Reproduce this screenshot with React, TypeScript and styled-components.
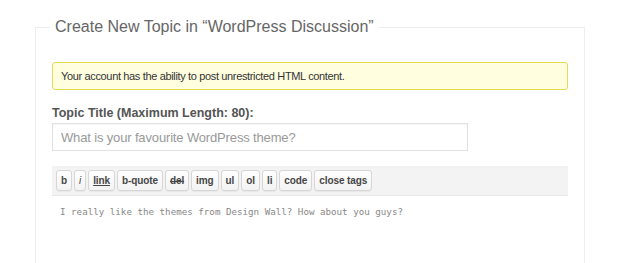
import React from "react";
import styled, { createGlobalStyle } from "styled-components";

const GlobalStyle = createGlobalStyle`
  html, body {
    margin: 0;
    padding: 0;
    background: #ffffff;
  }

  body {
    font-family: "Liberation Sans", Arial, sans-serif;
    color: #333;
  }
`;

const Page = styled.div`
  padding: 18px 0 0 35px;
  width: 550px;
`;

const TopicForm = styled.fieldset`
  margin: 0;
  padding: 0 16px 36px 16px;
  border: 1px solid #ededed;
  border-bottom: none;
  display: flex;
  flex-direction: column;
`;

const Legend = styled.legend`
  margin-left: -2px;
  padding: 0 5px;
  font-size: 16px;
  line-height: 18px;
  color: #666;
`;

const Notice = styled.div`
  margin-top: 26px;
  height: 26px;
  display: flex;
  align-items: center;
  padding: 0 8px;
  background: #ffffe0;
  border: 1px solid #e6db55;
  border-radius: 3px;
  font-size: 11px;
  letter-spacing: -0.35px;
  color: #333;
`;

const FieldLabel = styled.label`
  margin-top: 15px;
  font-size: 12.5px;
  font-weight: bold;
  line-height: 16px;
  color: #555;
`;

const TitleInput = styled.input`
  margin-top: 2px;
  box-sizing: border-box;
  width: 416px;
  height: 28px;
  padding: 0 8px;
  border: 1px solid #e2e2e2;
  box-shadow: inset 0 1px 2px rgba(0, 0, 0, 0.04);
  font-family: "Liberation Sans", Arial, sans-serif;
  font-size: 13px;
  letter-spacing: -0.15px;
  color: #333;
  outline: none;

  &::placeholder {
    color: #999;
  }
`;

const Toolbar = styled.div`
  margin-top: 15px;
  box-sizing: border-box;
  height: 30px;
  padding: 4px 4px 0;
  display: flex;
  gap: 2px;
  background: #f3f3f3;
  border-bottom: 1px solid #e6e6e6;
`;

const TagButton = styled.button<{ $mode?: "italic" | "link" | "del" }>`
  box-sizing: border-box;
  height: 21px;
  min-width: 12px;
  padding: 0 4px;
  border: 1px solid #d6d6d6;
  border-radius: 3px;
  background: linear-gradient(#fefefe, #f3f3f3);
  box-shadow: 0 1px 0 rgba(0, 0, 0, 0.04);
  font-family: "Liberation Sans", Arial, sans-serif;
  font-size: 10px;
  letter-spacing: -0.1px;
  font-weight: ${p => (p.$mode === "italic" ? "normal" : "bold")};
  font-style: ${p => (p.$mode === "italic" ? "italic" : "normal")};
  text-decoration: ${p =>
    p.$mode === "link" ? "underline" : p.$mode === "del" ? "line-through" : "none"};
  color: #464646;
  cursor: pointer;
`;

const Body = styled.div`
  padding: 10px 8px;
  font-family: "DejaVu Sans Mono", "Liberation Mono", monospace;
  font-size: 9.2px;
  line-height: 12px;
  color: #888;
`;

const tags: { label: string; mode?: "italic" | "link" | "del" }[] = [
  { label: "b" },
  { label: "i", mode: "italic" },
  { label: "link", mode: "link" },
  { label: "b-quote" },
  { label: "del", mode: "del" },
  { label: "img" },
  { label: "ul" },
  { label: "ol" },
  { label: "li" },
  { label: "code" },
  { label: "close tags" },
];

const App = () => {
  return (
    <Page>
      <GlobalStyle />
      <TopicForm>
        <Legend>Create New Topic in “WordPress Discussion”</Legend>
        <Notice>Your account has the ability to post unrestricted HTML content.</Notice>
        <FieldLabel>Topic Title (Maximum Length: 80):</FieldLabel>
        <TitleInput placeholder="What is your favourite WordPress theme?" />
        <Toolbar>
          {tags.map(t => (
            <TagButton key={t.label} $mode={t.mode}>
              {t.label}
            </TagButton>
          ))}
        </Toolbar>
        <Body>I really like the themes from Design Wall? How about you guys?</Body>
      </TopicForm>
    </Page>
  );
};

export default App;
